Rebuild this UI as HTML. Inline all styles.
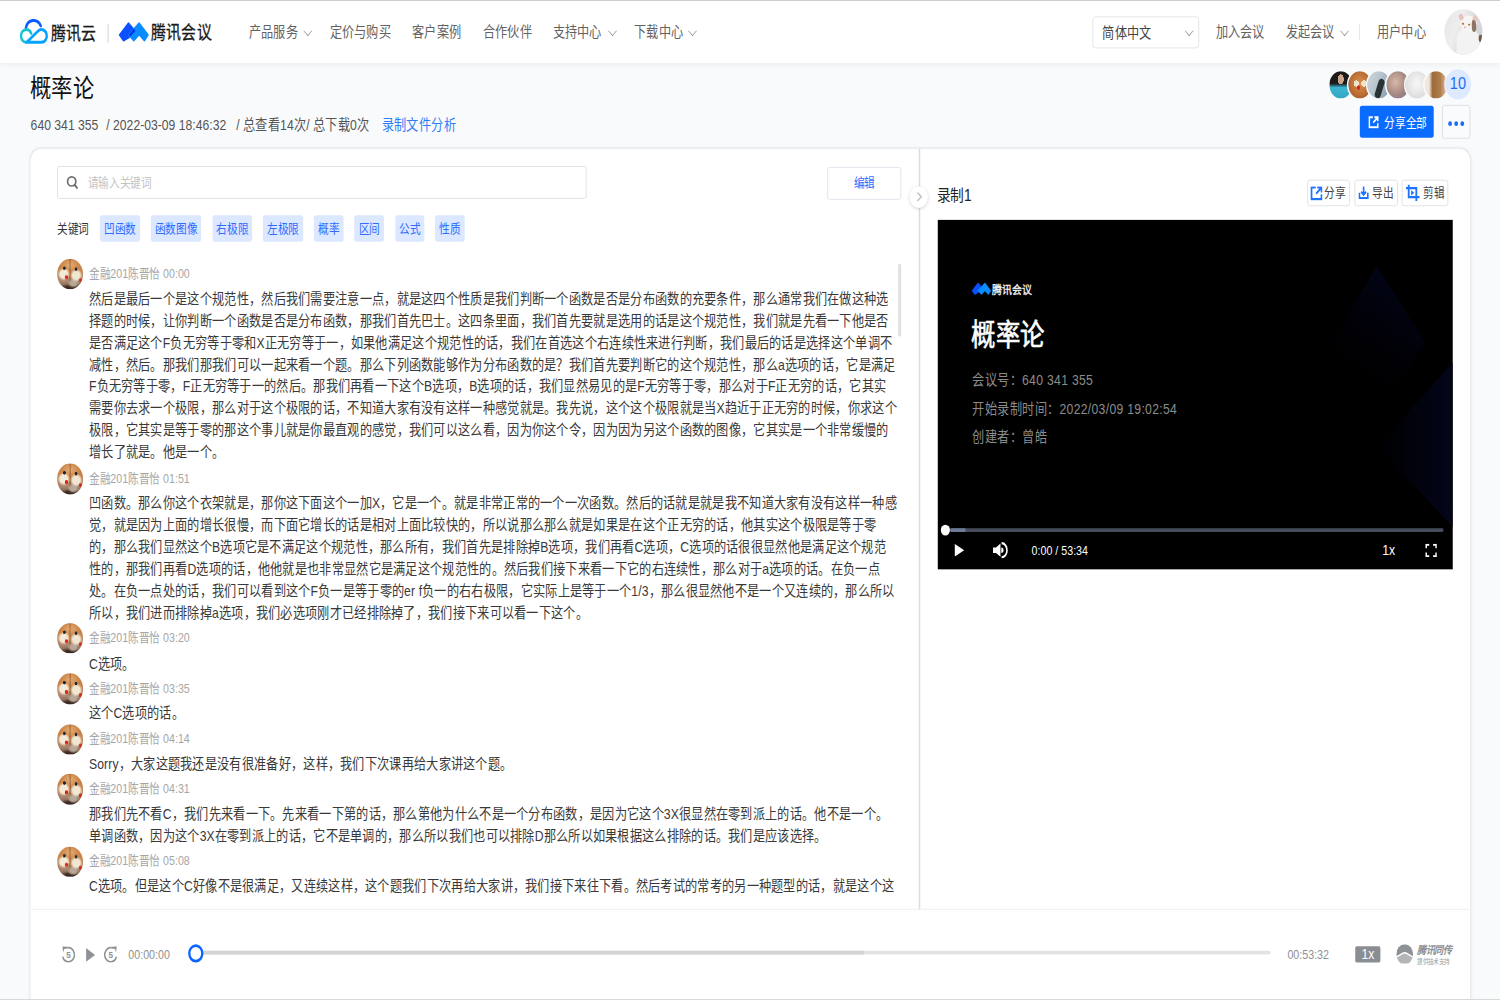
<!DOCTYPE html>
<html lang="zh-CN"><head><meta charset="utf-8">
<style>
html,body{margin:0;padding:0;width:1500px;height:1000px;overflow:hidden;background:#f9fafc;}
*{box-sizing:border-box;}
#root{position:absolute;left:0;top:0;width:1969px;height:1096px;transform:scale(0.7618,0.91241);transform-origin:0 0;font-family:"Liberation Sans",sans-serif;color:#333;background:#f9fafc;overflow:hidden;}
.a{position:absolute;white-space:nowrap;}
#hdr{position:absolute;left:0;top:0;width:1969px;height:68.6px;background:#fff;box-shadow:0 2px 6px rgba(0,0,0,0.05);}
#topline{position:absolute;left:0;top:0;width:1969px;height:1.3px;background:#c8c9cc;}
.nav{font-size:16px;line-height:20px;color:#626262;}
.rbtn{top:34.4px;height:28.7px;border:1.3px solid #dedede;border-radius:3px;background:#fff;}
.vm{left:45.5px;font-size:16px;line-height:20px;color:#8c8c8c;letter-spacing:0.4px;}
.pav{top:0;width:34px;height:34px;border-radius:50%;border:2px solid #f9fafc;overflow:hidden;}
.chev{position:absolute;width:8px;height:8px;border-right:1.3px solid #9a9a9a;border-bottom:1.3px solid #9a9a9a;transform:rotate(45deg);}
#card{position:absolute;left:40px;top:163px;width:1890px;height:1000px;background:#fff;border-radius:14px;box-shadow:0 0 3px rgba(30,40,80,0.14);}
.tag{position:absolute;top:72.6px;height:29.7px;background:#dbe8ff;border-radius:3px;color:#2f6bff;font-size:14px;line-height:29.7px;text-align:center;}
.txt{font-size:16px;line-height:24px;color:#393939;letter-spacing:0.15px;}
.name{font-size:14px;line-height:20px;color:#a6a6a6;}
.av{position:absolute;left:35.2px;width:33.6px;height:33.6px;border-radius:50%;
 background:radial-gradient(circle at 28% 30%,#1e2636 0 4.5%,transparent 6.5%),radial-gradient(circle at 73% 33%,#1e2636 0 4.5%,transparent 6.5%),
 radial-gradient(circle at 36% 60%,#d42a1e 0 6%,transparent 9%),radial-gradient(circle at 90% 70%,#c8341e 0 4%,transparent 7%),
 radial-gradient(ellipse 24% 22% at 26% 50%,#f3ead8 0 60%,transparent 100%),radial-gradient(ellipse 24% 22% at 74% 54%,#f0e6d2 0 60%,transparent 100%),
 radial-gradient(ellipse 22% 16% at 62% 80%,#b8a898 0 50%,transparent 100%),
 radial-gradient(ellipse 40% 14% at 50% 96%,#3c2a22 0 40%,transparent 100%),
 linear-gradient(90deg,transparent 0 47%,#7a4a2c 50%,transparent 53%),
 radial-gradient(ellipse 60% 40% at 50% 20%,#e6ad72 0,#cc8447 60%,transparent 100%),
 linear-gradient(180deg,#c47a40 0,#c08656 50%,#a88670 75%,#6a4a38 100%);}
</style></head><body>
<div id="root">

 <div id="hdr">
  <svg class="a" style="left:21.0px;top:16.4px;width:47.3px;height:36.2px" viewBox="0 0 47.3 36.2" preserveAspectRatio="none">
   <path d="M13.0,14.5 A10.4,10.4 0 0 1 32.5,12.3" fill="none" stroke="#0a5cff" stroke-width="3.2" stroke-linecap="round"/>
   <path d="M20,20.6 A7,7 0 1 0 13.9,30.4" fill="none" stroke="#12c4d4" stroke-width="3.2" stroke-linecap="round"/>
   <path d="M13.9,30.4 H33.3 A7,7 0 1 0 28.85,18.1 Z" fill="none" stroke="#05a3ff" stroke-width="3.2" stroke-linejoin="round"/>
  </svg>
  <div class="a" style="left:66.5px;top:24.5px;font-size:19.5px;line-height:24px;color:#1a1a1a;-webkit-text-stroke:0.35px #1a1a1a">腾讯云</div>
  <div class="a" style="left:141.3px;top:25.5px;width:1.3px;height:21px;background:#e3e3e3"></div>
  <svg class="a" style="left:152.3px;top:21.9px;width:47.3px;height:26.3px" viewBox="116 20 36 24" preserveAspectRatio="none">
   <path d="M119.6,34.9 L128.7,22.9 L135.6,31.0 L128.7,38 L123.7,40.9 Z" fill="#0a50ff" stroke="#0a50ff" stroke-width="1.2" stroke-linejoin="round"/>
   <path d="M128.7,34.9 L139.3,22.9 L148.4,34.9 L144.6,40.9 L139.3,34.9 L134,40.9 Z" fill="#0a8cff" stroke="#0a8cff" stroke-width="1.2" stroke-linejoin="round"/>
   <path d="M128.9,34.6 L134.3,28.5 L135.6,31.0 L130.5,36.5 Z" fill="#0036e6"/>
  </svg>
  <div class="a" style="left:198px;top:24px;font-size:19.5px;line-height:24px;color:#1a1a1a;-webkit-text-stroke:0.35px #1a1a1a">腾讯会议</div>
  <div class="a nav" style="left:327px;top:25.8px">产品服务</div><div class="chev" style="left:400px;top:29.7px"></div>
  <div class="a nav" style="left:433px;top:25.8px">定价与购买</div>
  <div class="a nav" style="left:541px;top:25.8px">客户案例</div>
  <div class="a nav" style="left:634px;top:25.8px">合作伙伴</div>
  <div class="a nav" style="left:725.5px;top:25.8px">支持中心</div><div class="chev" style="left:799.5px;top:29.7px"></div>
  <div class="a nav" style="left:832.5px;top:25.8px">下载中心</div><div class="chev" style="left:905px;top:29.7px"></div>
  <div class="a" style="left:1434px;top:18.3px;width:140px;height:34.3px;border:1.3px solid #e1e1e1;border-radius:4px"></div>
  <div class="a nav" style="left:1447px;top:26.6px;color:#444">简体中文</div><div class="chev" style="left:1556.5px;top:29.7px"></div>
  <div class="a nav" style="left:1596px;top:25.8px">加入会议</div>
  <div class="a nav" style="left:1688px;top:25.8px">发起会议</div><div class="chev" style="left:1761px;top:29.7px"></div>
  <div class="a" style="left:1783.6px;top:26.3px;width:1.3px;height:17.5px;background:#e3e3e3"></div>
  <div class="a nav" style="left:1807.5px;top:25.8px">用户中心</div>
  <div class="a" id="catav" style="left:1896px;top:10px;width:50.4px;height:50.2px;border-radius:50%;overflow:hidden;background:linear-gradient(115deg,#e4e5e6 0%,#eeeeef 35%,#d9dadb 60%,#cfd0d1 100%)">
   <div class="a" style="left:16px;top:20px;width:30px;height:34px;border-radius:45% 45% 20% 20%;background:#f3f3f3"></div>
   <div class="a" style="left:20.5px;top:7px;width:22px;height:18px;border-radius:50%;background:#f7f5f3"></div>
   <div class="a" style="left:19px;top:5px;width:6px;height:7px;border-radius:50% 50% 30% 30%;background:#e8c6bf;transform:rotate(-15deg)"></div>
   <div class="a" style="left:37px;top:6.5px;width:6px;height:7px;border-radius:50% 50% 30% 30%;background:#e8c6bf;transform:rotate(15deg)"></div>
   <div class="a" style="left:36px;top:12px;width:6px;height:13px;border-radius:40% 60% 50% 50%;background:#8d7466"></div>
   <div class="a" style="left:23px;top:14.5px;width:2.5px;height:2.5px;border-radius:50%;background:#b07a30"></div>
   <div class="a" style="left:31px;top:15.5px;width:2.5px;height:2.5px;border-radius:50%;background:#b07a30"></div>
   <div class="a" style="left:25.5px;top:18.5px;width:2px;height:2px;border-radius:50%;background:#e090a0"></div>
   <div class="a" style="left:45px;top:28px;width:4.5px;height:8px;border-radius:50%;background:#7a5a4a"></div>
  </div>
 </div>
 <div id="topline"></div>

 <div id="card">
  <div class="a" style="left:35.2px;top:19.2px;width:695px;height:36px;border:1.3px solid #dcdcdc;border-radius:3px"></div>
  <svg class="a" style="left:46.6px;top:29.3px;width:15.8px;height:15.4px" viewBox="0 0 12 14" preserveAspectRatio="none">
   <ellipse cx="5.4" cy="6.2" rx="4.1" ry="4.6" fill="none" stroke="#6f6f6f" stroke-width="1.7"/>
   <path d="M8.3,9.6 L11,12.8" stroke="#6f6f6f" stroke-width="2" stroke-linecap="round"/>
  </svg>
  <div class="a" style="left:74.9px;top:27px;font-size:14px;line-height:20px;color:#c4c4c4">请输入关键词</div>
  <div class="a" style="left:1045.5px;top:20.4px;width:97.2px;height:35.2px;border:1.3px solid #dde1e9;border-radius:3px;background:#fff"></div>
  <div class="a" style="left:1080.5px;top:26.8px;font-size:14px;line-height:20px;color:#2f6bff">编辑</div>
  <div class="a" style="left:34.8px;top:76.6px;font-size:14px;line-height:20px;color:#333">关键词</div>
  <div class="tag" style="left:91.3px;width:52.5px">凹函数</div>
  <div class="tag" style="left:158.2px;width:65.9px">函数图像</div>
  <div class="tag" style="left:238.6px;width:52.6px">右极限</div>
  <div class="tag" style="left:305.4px;width:52.6px">左极限</div>
  <div class="tag" style="left:372.4px;width:38.9px">概率</div>
  <div class="tag" style="left:425.2px;width:38.9px">区间</div>
  <div class="tag" style="left:478.5px;width:38.9px">公式</div>
  <div class="tag" style="left:531.4px;width:39px">性质</div>
  <div class="a" id="list" style="left:0;top:0;width:1166px;height:833.7px;overflow:hidden">
  <div class="av" style="top:120.9px"></div>
  <div class="a name" style="left:76.8px;top:126.6px">金融201陈晋怡 00:00</div>
  <div class="a txt" style="left:76.8px;top:153.1px">然后是最后一个是这个规范性，然后我们需要注意一点，就是这四个性质是我们判断一个函数是否是分布函数的充要条件，那么通常我们在做这种选<br>择题的时候，让你判断一个函数是否是分布函数，那我们首先巴士。这四条里面，我们首先要就是选用的话是这个规范性，我们就是先看一下他是否<br>是否满足这个F负无穷等于零和X正无穷等于一，如果他满足这个规范性的话，我们在首选这个右连续性来进行判断，我们最后的话是选择这个单调不<br>减性，然后。那我们那我们可以一起来看一个题。那么下列函数能够作为分布函数的是？我们首先要判断它的这个规范性，那么a选项的话，它是满足<br>F负无穷等于零，F正无穷等于一的然后。那我们再看一下这个B选项，B选项的话，我们显然易见的是F无穷等于零，那么对于F正无穷的话，它其实<br>需要你去求一个极限，那么对于这个极限的话，不知道大家有没有这样一种感觉就是。我先说，这个这个极限就是当X趋近于正无穷的时候，你求这个<br>极限，它其实是等于零的那这个事儿就是你最直观的感觉，我们可以这么看，因为你这个令，因为因为另这个函数的图像，它其实是一个非常缓慢的<br>增长了就是。他是一个。</div>
  <div class="av" style="top:345.2px"></div>
  <div class="a name" style="left:76.8px;top:350.9px">金融201陈晋怡 01:51</div>
  <div class="a txt" style="left:76.8px;top:376.8px">凹函数。那么你这个衣架就是，那你这下面这个一加X，它是一个。就是非常正常的一个一次函数。然后的话就是就是我不知道大家有没有这样一种感<br>觉，就是因为上面的增长很慢，而下面它增长的话是相对上面比较快的，所以说那么那么就是如果是在这个正无穷的话，他其实这个极限是等于零<br>的，那么我们显然这个B选项它是不满足这个规范性，那么所有，我们首先是排除掉B选项，我们再看C选项，C选项的话很很显然他是满足这个规范<br>性的，那我们再看D选项的话，他他就是也非常显然它是满足这个规范性的。然后我们接下来看一下它的右连续性，那么对于a选项的话。在负一点<br>处。在负一点处的话，我们可以看到这个F负一是等于零的er f负一的右右极限，它实际上是等于一个1/3，那么很显然他不是一个又连续的，那么所以<br>所以，我们进而排除掉a选项，我们必选项刚才已经排除掉了，我们接下来可以看一下这个。</div>
  <div class="av" style="top:519.8px"></div>
  <div class="a name" style="left:76.8px;top:525.5px">金融201陈晋怡 03:20</div>
  <div class="a txt" style="left:76.8px;top:552.7px">C选项。</div>
  <div class="av" style="top:575.1px"></div>
  <div class="a name" style="left:76.8px;top:580.8px">金融201陈晋怡 03:35</div>
  <div class="a txt" style="left:76.8px;top:607.2px">这个C选项的话。</div>
  <div class="av" style="top:630.5px"></div>
  <div class="a name" style="left:76.8px;top:636.2px">金融201陈晋怡 04:14</div>
  <div class="a txt" style="left:76.8px;top:662.7px">Sorry，大家这题我还是没有很准备好，这样，我们下次课再给大家讲这个题。</div>
  <div class="av" style="top:685.2px"></div>
  <div class="a name" style="left:76.8px;top:690.9px">金融201陈晋怡 04:31</div>
  <div class="a txt" style="left:76.8px;top:717.7px">那我们先不看C，我们先来看一下。先来看一下第的话，那么第他为什么不是一个分布函数，是因为它这个3X很显然在零到派上的话。他不是一个。<br>单调函数，因为这个3X在零到派上的话，它不是单调的，那么所以我们也可以排除D那么所以如果根据这么排除的话。我们是应该选择。</div>
  <div class="av" style="top:764.7px"></div>
  <div class="a name" style="left:76.8px;top:770.4px">金融201陈晋怡 05:08</div>
  <div class="a txt" style="left:76.8px;top:796.4px">C选项。但是这个C好像不是很满足，又连续这样，这个题我们下次再给大家讲，我们接下来往下看。然后考试的常考的另一种题型的话，就是这个这</div>
  </div>
  <div class="a" style="left:1139px;top:126.3px;width:3.7px;height:79.6px;background:#e1e1e1;border-radius:2px"></div>
  <div class="a" style="left:1166px;top:0;width:1.6px;height:833.7px;background:#dcdcdc"></div>
  <div class="a" style="left:0;top:833px;width:1890px;height:1.3px;background:#eeeeee"></div>
  <div class="a" style="left:1153.7px;top:40.5px;width:24.2px;height:24.8px;border-radius:50%;background:#fff;box-shadow:0 1px 4px rgba(0,0,0,0.18)"></div>

  <div class="a" style="left:1189.5px;top:38.8px;font-size:18px;line-height:24px;color:#222">录制1</div>
  <div class="a rbtn" style="left:1675.5px;width:56.7px"></div>
  <div class="a rbtn" style="left:1737.6px;width:57px"></div>
  <div class="a rbtn" style="left:1800.2px;width:61px"></div>
  <svg class="a" style="left:1679.7px;top:40.9px;width:16.3px;height:15.7px" viewBox="0 0 16 16" preserveAspectRatio="none">
   <path d="M7,1.5 H1.5 V14.5 H14.5 V9" fill="none" stroke="#1f74ff" stroke-width="2.4"/>
   <path d="M9,1.5 H14.5 V7 M14.2,1.8 L7.5,8.5" fill="none" stroke="#1f74ff" stroke-width="2.2"/>
  </svg>
  <div class="a" style="left:1698.5px;top:38.2px;font-size:14px;line-height:20px;color:#444">分享</div>
  <svg class="a" style="left:1742.7px;top:41.4px;width:14px;height:14.5px" viewBox="0 0 14 14" preserveAspectRatio="none">
   <path d="M1.5,7 V12.5 H12.5 V7" fill="none" stroke="#1f74ff" stroke-width="2.2"/>
   <path d="M7,0.5 V9 M3.8,6 L7,9.2 L10.2,6" fill="none" stroke="#1f74ff" stroke-width="2.2"/>
  </svg>
  <div class="a" style="left:1761px;top:38.2px;font-size:14px;line-height:20px;color:#444">导出</div>
  <svg class="a" style="left:1805.1px;top:39.1px;width:18.9px;height:18.7px" viewBox="0 0 18 18" preserveAspectRatio="none">
   <path d="M4,0.5 V13.5 H17.5 M0.5,4 H13.5 V17.5" fill="none" stroke="#1f74ff" stroke-width="2.3"/>
   <path d="M7,6.3 L11,9 L7,11.7 Z" fill="#1f74ff"/>
  </svg>
  <div class="a" style="left:1828px;top:38.2px;font-size:14px;line-height:20px;color:#444">剪辑</div>
  <div class="a" id="video" style="left:1190.5px;top:78.1px;width:676.3px;height:382.8px;background:#000;overflow:hidden">
   <svg class="a" style="left:0;top:0;width:676.3px;height:382.2px" viewBox="0 0 676.3 382.2" preserveAspectRatio="none">
    <defs>
     <linearGradient id="g1" x1="0" y1="0" x2="1" y2="0"><stop offset="0" stop-color="#000"/><stop offset="1" stop-color="#03051a"/></linearGradient>
     <linearGradient id="g2" x1="0.15" y1="0.9" x2="0.55" y2="0.05"><stop offset="0" stop-color="#000" stop-opacity="0"/><stop offset="1" stop-color="#020416"/></linearGradient>
    </defs>
    <path d="M511.2,140.3 L576.3,50.9 L640,135 L585,205 Z" fill="url(#g2)"/>
    <path d="M576.3,249 L676.3,156.1 L676.3,336.7 Z" fill="url(#g1)"/>
   </svg>
   <svg class="a" style="left:42.5px;top:67.1px;width:30.7px;height:17px" viewBox="116 20 36 24" preserveAspectRatio="none">
    <path d="M119.6,34.9 L128.7,22.9 L135.6,31.0 L128.7,38 L123.7,40.9 Z" fill="#0a50ff" stroke="#0a50ff" stroke-width="1.2" stroke-linejoin="round"/>
    <path d="M128.7,34.9 L139.3,22.9 L148.4,34.9 L144.6,40.9 L139.3,34.9 L134,40.9 Z" fill="#0a8cff" stroke="#0a8cff" stroke-width="1.2" stroke-linejoin="round"/>
   </svg>
   <div class="a" style="left:71.5px;top:67.5px;font-size:13px;line-height:18px;color:#e8e8e8;font-weight:bold">腾讯会议</div>
   <div class="a" style="left:44.6px;top:105.5px;font-size:32px;line-height:40px;color:#fff;-webkit-text-stroke:0.7px #fff">概率论</div>
   <div class="a vm" style="top:166px">会议号：640 341 355</div>
   <div class="a vm" style="top:197.6px">开始录制时间：2022/03/09 19:02:54</div>
   <div class="a vm" style="top:228.3px">创建者：曾皓</div>
   <div class="a" style="left:16.2px;top:337.7px;width:648.8px;height:4.2px;background:#444c5c;border-radius:2px"></div>
   <div class="a" style="left:16.2px;top:337.7px;width:21px;height:4.2px;background:#6c7a96;border-radius:2px"></div>
   <div class="a" style="left:4.6px;top:334.1px;width:12px;height:12px;border-radius:50%;background:#fff"></div>
   <svg class="a" style="left:22.5px;top:355.2px;width:12.6px;height:14.1px" viewBox="0 0 12 14" preserveAspectRatio="none"><path d="M0,0 L12,7 L0,14 Z" fill="#fff"/></svg>
   <svg class="a" style="left:72.9px;top:352.9px;width:19.7px;height:18.1px" viewBox="0 0 20 18" preserveAspectRatio="none">
    <path d="M0.5,6 H4.5 L10.5,1.8 V16.2 L4.5,12 H0.5 Z" fill="#fff"/>
    <path d="M11.5,6 A3,3 0 0 1 11.5,12 Z" fill="#fff"/>
    <path d="M12,1.2 A7.2,7.8 0 0 1 12,16.8" fill="none" stroke="#fff" stroke-width="2.3"/>
   </svg>
   <div class="a" style="left:123.7px;top:352.2px;font-size:14px;line-height:20px;color:#fff">0:00 / 53:34</div>
   <div class="a" style="left:584px;top:352.3px;font-size:16px;line-height:20px;color:#fff">1x</div>
   <svg class="a" style="left:640.3px;top:355.1px;width:15.3px;height:14.5px" viewBox="0 0 15 15" preserveAspectRatio="none">
    <path d="M1,5 V1 H5 M10,1 H14 V5 M14,10 V14 H10 M5,14 H1 V10" fill="none" stroke="#fff" stroke-width="2.2"/>
   </svg>
  </div>
  <svg class="a" style="left:41px;top:873.8px;width:18.2px;height:18.1px" viewBox="0 0 18 18" preserveAspectRatio="none">
   <path d="M7.6,1.63 A7.8,7.8 0 1 1 1.27,11.42" fill="none" stroke="#8e9195" stroke-width="2.0"/>
   <path d="M1.0,0.2 L7.8,0.7 L7.8,2.6 L3.2,3.2 L1.8,7.2 Z" fill="#8e9195"/>
   <text x="8.8" y="13.3" font-size="10.5" text-anchor="middle" fill="#8e9195" font-family="Liberation Sans" font-weight="bold">5</text>
  </svg>
  <svg class="a" style="left:73.3px;top:875.6px;width:11.8px;height:15.2px" viewBox="0 0 12 15" preserveAspectRatio="none"><path d="M0,0 L12,7.5 L0,15 Z" fill="#8e9195"/></svg>
  <svg class="a" style="left:96.4px;top:873.8px;width:18.2px;height:18.1px" viewBox="0 0 18 18" preserveAspectRatio="none">
   <g transform="translate(18,0) scale(-1,1)">
   <path d="M7.6,1.63 A7.8,7.8 0 1 1 1.27,11.42" fill="none" stroke="#8e9195" stroke-width="2.0"/>
   <path d="M1.0,0.2 L7.8,0.7 L7.8,2.6 L3.2,3.2 L1.8,7.2 Z" fill="#8e9195"/>
   </g>
   <text x="9.2" y="13.3" font-size="10.5" text-anchor="middle" fill="#8e9195" font-family="Liberation Sans" font-weight="bold">5</text>
  </svg>
  <div class="a" style="left:128.5px;top:873.1px;font-size:14px;line-height:20px;color:#8f8f8f">00:00:00</div>
  <div class="a" style="left:220px;top:878.6px;width:1408.4px;height:4.6px;background:#e3e3e3;border-radius:2px"></div>
  <div class="a" style="left:220px;top:878.6px;width:875px;height:4.6px;background:#d3d3d3;border-radius:2px"></div>
  <div class="a" style="left:206.9px;top:872.1px;width:20.4px;height:19.8px;border-radius:50%;background:#fff;border:3.2px solid #0a64ff"></div>
  <div class="a" style="left:1650px;top:873.4px;font-size:14px;line-height:20px;color:#8f8f8f">00:53:32</div>
  <div class="a" style="left:1738.7px;top:874.1px;width:33.7px;height:18px;background:#8a8d91;border-radius:2px;color:#fff;font-size:16px;line-height:18px;text-align:center">1x</div>
  <svg class="a" style="left:1793.4px;top:871.6px;width:21.8px;height:21.9px" viewBox="0 0 22 22" preserveAspectRatio="none">
   <defs><clipPath id="cc"><ellipse cx="11" cy="11" rx="11" ry="11"/></clipPath></defs>
   <g clip-path="url(#cc)">
    <rect x="0" y="0" width="22" height="22" fill="#b3b5b7"/>
    <path d="M-1,0 H23 V13.2 C19,13.2 15,8.6 11,8.6 C7,8.6 3,13.2 -1,13.2 Z" fill="#8e9195"/>
    <path d="M-1,13.8 C3,13.8 7,9.3 11,9.3 C15,9.3 19,13.8 23,13.8" fill="none" stroke="#fff" stroke-width="1.7"/>
   </g>
  </svg>
  <div class="a" style="left:1820.5px;top:871.5px;font-size:12px;line-height:14px;color:#8e9094;font-weight:bold;font-style:italic;letter-spacing:-0.9px">腾讯同传</div>
  <div class="a" style="left:1820.5px;top:887px;font-size:7.5px;line-height:8px;color:#9a9ca0">提供技术支持</div>
  <svg class="a" style="left:1160px;top:47px;width:12px;height:12px" viewBox="0 0 12 12" preserveAspectRatio="none"><path d="M4.3,1.2 L9.4,5.7 L4.3,10.2" fill="none" stroke="#c0c4cc" stroke-width="1.9"/></svg>
 </div>

 <div class="a" style="left:39.5px;top:79px;font-size:28px;line-height:36px;color:#111">概率论</div>
 <div class="a" style="left:40.2px;top:127px;font-size:16px;line-height:20px;color:#555">640 341 355</div>
 <div class="a" style="left:139.5px;top:127px;font-size:16px;line-height:20px;color:#555">/ 2022-03-09 18:46:32</div>
 <div class="a" style="left:310px;top:127px;font-size:16px;line-height:20px;color:#555;letter-spacing:0.15px">/ 总查看14次/ 总下载0次</div>
 <div class="a" style="left:501px;top:127px;font-size:16px;line-height:20px;color:#2f7cf6;letter-spacing:0.3px">录制文件分析</div>
 <div class="a" id="avs" style="left:1742.5px;top:75.5px;width:190px;height:34px">
  <div class="a pav" style="left:0px;background:radial-gradient(ellipse at 50% 30%,#c9a58c 0 18%,transparent 19%),linear-gradient(180deg,#1d1a1a 0,#1d1a1a 45%,#3db5d0 60%,#2fa6c2 100%)"></div>
  <div class="a pav" style="left:25px;background:radial-gradient(circle at 35% 45%,#f1e3c9 0 13%,transparent 14%),radial-gradient(circle at 68% 45%,#f1e3c9 0 13%,transparent 14%),radial-gradient(circle at 45% 60%,#cf2a20 0 9%,transparent 10%),radial-gradient(circle at 50% 45%,#d99350 0,#b86a32 60%,#7a4a26 100%)"></div>
  <div class="a pav" style="left:50px;background:linear-gradient(120deg,#cfd7dc 0,#b9c6ce 40%,#7f98a8 100%)"><div class="a" style="left:12px;top:8px;width:8px;height:22px;background:#2a3233;border-radius:4px;transform:rotate(20deg)"></div></div>
  <div class="a pav" style="left:75px;background:radial-gradient(circle at 40% 40%,#d8b9a8 0,#a98b84 50%,#6e6f8a 100%)"></div>
  <div class="a pav" style="left:100px;background:radial-gradient(circle at 50% 45%,#f7f7f7 0,#e6e6e6 50%,#cfcfcf 100%)"></div>
  <div class="a pav" style="left:125px;background:linear-gradient(90deg,#f1e7dc 0,#f1e7dc 20%,#9c6a3c 35%,#b27f4c 70%,#e9c9b8 100%)"></div>
  <div class="a pav" style="left:153px;width:36.5px;height:35px;top:-0.8px;background:#dde9ff;border:1.5px solid #f9fafc;color:#1f6cf5;font-size:19px;line-height:32px;text-align:center">10</div>
 </div>
 <div class="a" style="left:1785.3px;top:116.1px;width:97px;height:35px;background:#0a6bff;border-radius:3px"></div>
 <svg class="a" style="left:1796px;top:127px;width:14.2px;height:14px" viewBox="0 0 14 14" preserveAspectRatio="none">
  <path d="M6,1.5 H1.5 V12.5 H12.5 V8" fill="none" stroke="#fff" stroke-width="2"/>
  <path d="M8,1.5 H12.5 V6 M12.5,1.5 L6.5,7.5" fill="none" stroke="#fff" stroke-width="2"/>
 </svg>
 <div class="a" style="left:1816.5px;top:123.5px;font-size:14px;line-height:20px;color:#fff;letter-spacing:0.3px">分享全部</div>
 <div class="a" style="left:1893.3px;top:115.3px;width:37px;height:36.8px;border:1.2px solid #dcdcdc;border-radius:3px;background:#fafbfc"></div>
 <div class="a" style="left:1900.5px;top:132.5px;width:5px;height:5px;border-radius:50%;background:#1a6cf5"></div>
 <div class="a" style="left:1908.5px;top:132.5px;width:5px;height:5px;border-radius:50%;background:#1a6cf5"></div>
 <div class="a" style="left:1916.5px;top:132.5px;width:5px;height:5px;border-radius:50%;background:#1a6cf5"></div>
 <div class="a" style="left:0;top:1094.8px;width:1969px;height:1.3px;background:#d4d6d4"></div>
</div>
</body></html>
